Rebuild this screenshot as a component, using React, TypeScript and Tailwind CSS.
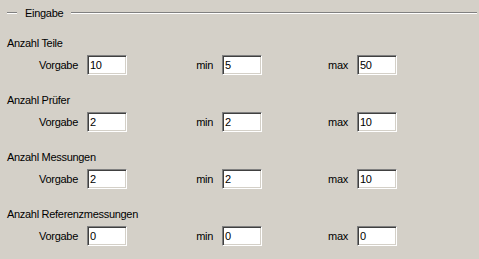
import React from 'react';

type Row = { label: string; vorgabe: string; min: string; max: string };

const rows: Row[] = [
  { label: 'Anzahl Teile', vorgabe: '10', min: '5', max: '50' },
  { label: 'Anzahl Prüfer', vorgabe: '2', min: '2', max: '10' },
  { label: 'Anzahl Messungen', vorgabe: '2', min: '2', max: '10' },
  { label: 'Anzahl Referenzmessungen', vorgabe: '0', min: '0', max: '0' },
];

const Field: React.FC<{ value: string }> = ({ value }) => (
  <div className="ml-[9px] flex h-[20px] w-[40px] items-center border border-t-[#808080] border-l-[#808080] border-r-white border-b-white bg-white pl-[2px] shadow-[inset_1px_1px_0_#404040,inset_-1px_-1px_0_#d4d0c8]">
    {value}
  </div>
);

const App: React.FC = () => {
  return (
    <div className="h-[259px] w-[479px] overflow-hidden bg-[#d4d0c8] font-['Liberation_Sans',Arial,sans-serif] text-[11px] leading-[13px] tracking-[-0.3px] text-black">
      <div className="mt-[6px] flex h-[14px] items-center">
        <div className="ml-[7px] w-[10px] border-t border-b border-t-[#808080] border-b-white" />
        <span className="px-[8px]">Eingabe</span>
        <div className="mr-[2px] flex-1 border-t border-b border-t-[#808080] border-b-white" />
      </div>

      {rows.map((r, i) => (
        <div key={r.label} className={i === 0 ? 'mt-[17px]' : 'mt-[19px]'}>
          <div className="h-[13px] pl-[7px]">{r.label}</div>
          <div className="mt-[5px] flex items-center">
            <span className="w-[78px] text-right">Vorgabe</span>
            <Field value={r.vorgabe} />
            <span className="w-[86px] text-right">min</span>
            <Field value={r.min} />
            <span className="w-[86px] text-right">max</span>
            <Field value={r.max} />
          </div>
        </div>
      ))}
    </div>
  );
};

export default App;
